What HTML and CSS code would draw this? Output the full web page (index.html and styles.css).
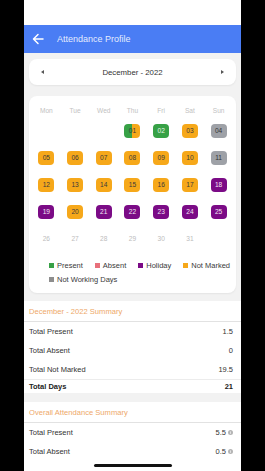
FILE: index.html
```html
<!DOCTYPE html>
<html lang="en">
<head>
<meta charset="utf-8">
<title>Attendance Profile</title>
<link rel="stylesheet" href="styles.css">
</head>
<body>
<div class="phone">
  <div class="status"></div>
  <header class="appbar">
    <svg class="back" width="12" height="12" viewBox="0 0 12 12" aria-hidden="true">
      <path d="M11 6H1.6M6 1.5L1.5 6L6 10.5" fill="none" stroke="#fff" stroke-width="1.5" stroke-linecap="round" stroke-linejoin="round"/>
    </svg>
    <span class="title">Attendance Profile</span>
  </header>
  <main class="content">
    <div class="card month">
      <span class="tri tri-left"></span>
      <span class="month-label">December - 2022</span>
      <span class="tri tri-right"></span>
    </div>
    <div class="card calendar">
      <div class="grid">
        <div class="dow">Mon</div><div class="dow">Tue</div><div class="dow">Wed</div><div class="dow">Thu</div><div class="dow">Fri</div><div class="dow">Sat</div><div class="dow">Sun</div>

        <div class="cell"></div><div class="cell"></div><div class="cell"></div>
        <div class="cell"><span class="pill split">01</span></div>
        <div class="cell"><span class="pill present">02</span></div>
        <div class="cell"><span class="pill marked">03</span></div>
        <div class="cell"><span class="pill off">04</span></div>

        <div class="cell"><span class="pill marked">05</span></div>
        <div class="cell"><span class="pill marked">06</span></div>
        <div class="cell"><span class="pill marked">07</span></div>
        <div class="cell"><span class="pill marked">08</span></div>
        <div class="cell"><span class="pill marked">09</span></div>
        <div class="cell"><span class="pill marked">10</span></div>
        <div class="cell"><span class="pill off">11</span></div>

        <div class="cell"><span class="pill marked">12</span></div>
        <div class="cell"><span class="pill marked">13</span></div>
        <div class="cell"><span class="pill marked">14</span></div>
        <div class="cell"><span class="pill marked">15</span></div>
        <div class="cell"><span class="pill marked">16</span></div>
        <div class="cell"><span class="pill marked">17</span></div>
        <div class="cell"><span class="pill holiday">18</span></div>

        <div class="cell"><span class="pill holiday">19</span></div>
        <div class="cell"><span class="pill marked">20</span></div>
        <div class="cell"><span class="pill holiday">21</span></div>
        <div class="cell"><span class="pill holiday">22</span></div>
        <div class="cell"><span class="pill holiday">23</span></div>
        <div class="cell"><span class="pill holiday">24</span></div>
        <div class="cell"><span class="pill holiday">25</span></div>

        <div class="cell"><span class="pill plain">26</span></div>
        <div class="cell"><span class="pill plain">27</span></div>
        <div class="cell"><span class="pill plain">28</span></div>
        <div class="cell"><span class="pill plain">29</span></div>
        <div class="cell"><span class="pill plain">30</span></div>
        <div class="cell"><span class="pill plain">31</span></div>
        <div class="cell"></div>
      </div>
      <div class="legend">
        <span class="item"><i class="sw sw-present"></i>Present</span>
        <span class="item"><i class="sw sw-absent"></i>Absent</span>
        <span class="item"><i class="sw sw-holiday"></i>Holiday</span>
        <span class="item"><i class="sw sw-marked"></i>Not Marked</span>
        <span class="item"><i class="sw sw-off"></i>Not Working Days</span>
      </div>
    </div>

    <section class="summary">
      <div class="sum-title">December - 2022 Summary</div>
      <div class="row"><span>Total Present</span><span>1.5</span></div>
      <div class="row"><span>Total Absent</span><span>0</span></div>
      <div class="row"><span>Total Not Marked</span><span>19.5</span></div>
      <div class="row total"><span>Total Days</span><span>21</span></div>
    </section>

    <section class="summary overall">
      <div class="sum-title">Overall Attendance Summary</div>
      <div class="row"><span>Total Present</span><span class="val">5.5<svg class="info" width="5" height="5" viewBox="0 0 10 10"><circle cx="5" cy="5" r="5" fill="#b4b4b4"/><path d="M5 4.3v3.2" stroke="#fff" stroke-width="1.4"/><circle cx="5" cy="2.8" r="0.8" fill="#fff"/></svg></span></div>
      <div class="row"><span>Total Absent</span><span class="val">0.5<svg class="info" width="5" height="5" viewBox="0 0 10 10"><circle cx="5" cy="5" r="5" fill="#b4b4b4"/><path d="M5 4.3v3.2" stroke="#fff" stroke-width="1.4"/><circle cx="5" cy="2.8" r="0.8" fill="#fff"/></svg></span></div>
    </section>
  </main>
  <div class="home"><div class="indicator"></div></div>
</div>
</body>
</html>
```

FILE: styles.css
```css
* { box-sizing: border-box; margin: 0; padding: 0; }

html, body {
  background: #000;
  width: 265px;
  height: 471px;
  overflow: hidden;
}

body {
  font-family: "Liberation Sans", Arial, sans-serif;
  color: #333;
}

.phone {
  width: 217px;
  height: 471px;
  margin: 0 auto;
  background: #f2f2f2;
  display: flex;
  flex-direction: column;
}

.status {
  height: 25px;
  background: #fff;
  flex: none;
}

.appbar {
  height: 28px;
  flex: none;
  background: #4a7df4;
  display: flex;
  align-items: center;
  padding-left: 8px;
  gap: 13px;
}

.back { display: block; }

.title {
  color: rgba(255, 255, 255, 0.88);
  font-size: 9px;
}

.content {
  flex: 1;
  overflow: hidden;
  display: flex;
  flex-direction: column;
}

.card {
  background: #fff;
  border-radius: 8px;
  margin: 0 5px;
  box-shadow: 0 1px 2px rgba(0, 0, 0, 0.06);
  flex: none;
}

.month {
  margin-top: 6px;
  height: 26px;
  display: flex;
  align-items: center;
  justify-content: space-between;
  padding: 0 12px 0 12px;
}

.month-label {
  font-size: 7.8px;
  color: #333;
}

.tri {
  width: 0;
  height: 0;
  border-top: 2.5px solid transparent;
  border-bottom: 2.5px solid transparent;
}

.tri-left { border-right: 3px solid #555; }
.tri-right { border-left: 3px solid #555; }

.calendar {
  margin-top: 11px;
  padding: 8px 3px 7px;
}

.grid {
  display: grid;
  grid-template-columns: repeat(7, 1fr);
  grid-auto-rows: 27px;
  grid-template-rows: 13px;
}

.dow {
  font-size: 6.6px;
  color: #c2c2c2;
  display: flex;
  align-items: center;
  justify-content: center;
}

.cell {
  display: flex;
  align-items: center;
  justify-content: center;
}

.pill {
  width: 16px;
  height: 14px;
  border-radius: 4px;
  font-size: 6.6px;
  display: flex;
  align-items: center;
  justify-content: center;
  color: #3a3a3a;
}

.marked { background: #f6a81a; }
.present { background: #37a146; color: #e8f6ea; }
.split { background: linear-gradient(90deg, #37a146 50%, #f6a81a 50%); }
.off { background: #9ea1a7; color: #333; }
.holiday { background: #7b0b86; color: #f3e6f5; }
.plain { color: #bdbdbd; }

.legend {
  display: flex;
  flex-wrap: wrap;
  column-gap: 12px;
  padding: 6px 0 0 17px;
}

.item {
  display: flex;
  align-items: center;
  height: 14px;
  font-size: 7.5px;
  color: #3a3a3a;
  gap: 3px;
}

.sw {
  display: block;
  width: 5px;
  height: 5px;
}

.sw-present { background: #37a146; }
.sw-absent { background: #e8707b; }
.sw-holiday { background: #7b0b86; }
.sw-marked { background: #f6a81a; }
.sw-off { background: #8d8d8d; }

.summary {
  background: #fff;
  margin-top: 8px;
  flex: none;
}

.overall { margin-top: 9px; }

.sum-title {
  height: 21px;
  border-bottom: 1px solid #e2e2e2;
  display: flex;
  align-items: center;
  padding-left: 5px;
  font-size: 7.6px;
  color: #eea868;
}

.row {
  height: 19px;
  display: flex;
  align-items: center;
  justify-content: space-between;
  padding: 0 8px 0 5px;
  font-size: 7.5px;
  color: #333;
}

.row.total {
  height: 14px;
  border-top: 1px solid #ececec;
  font-weight: bold;
  color: #222;
}

.val {
  display: flex;
  align-items: center;
  gap: 2px;
}

.info { display: block; }

.home {
  height: 17px;
  flex: none;
  background: #fff;
  display: flex;
  justify-content: center;
  padding-top: 10px;
}

.indicator {
  width: 78px;
  height: 3px;
  border-radius: 2px;
  background: #111;
}
```
